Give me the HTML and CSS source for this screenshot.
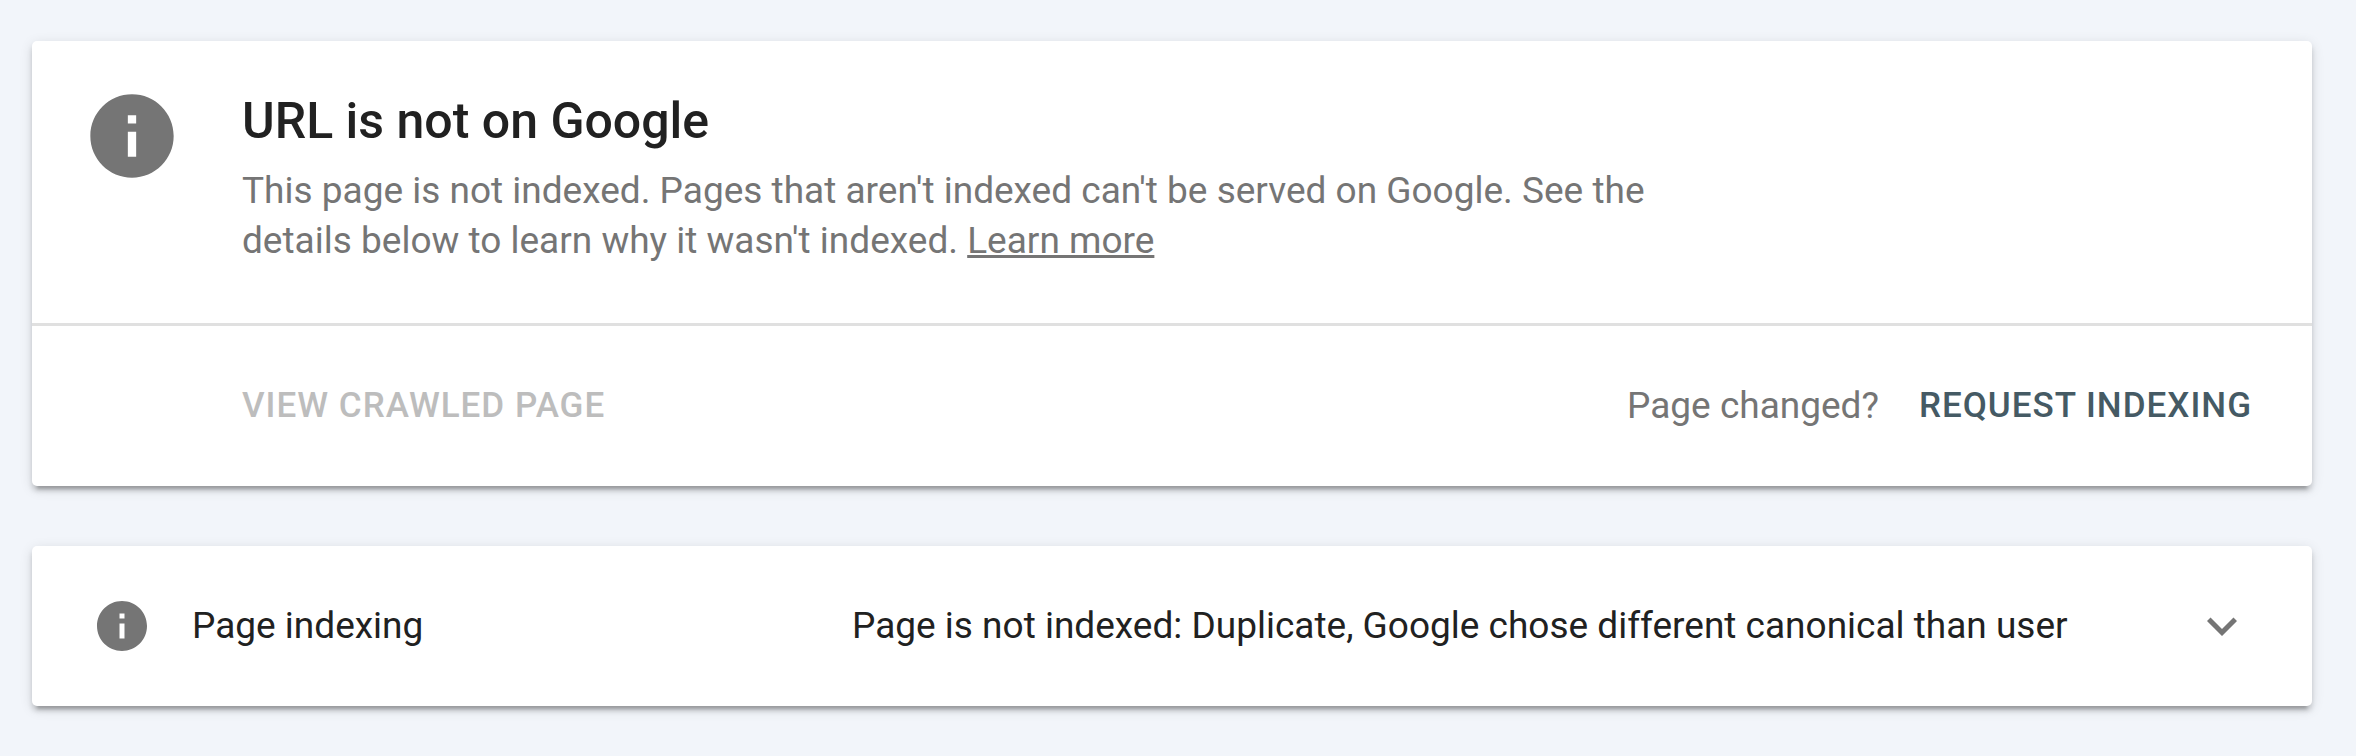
FILE: index.html
```
<!DOCTYPE html>
<html lang="en">
<head>
  <meta charset="UTF-8">
  <meta name="viewport" content="width=device-width, initial-scale=1.0">
  <title>URL Inspection</title>
  <link rel="stylesheet" href="styles.css">
</head>
<body>
  <main class="page">
    <section class="card">
      <div class="verdict">
        <svg class="icon icon-large" viewBox="0 0 24 24" aria-hidden="true">
          <path d="M12 2C6.48 2 2 6.48 2 12s4.48 10 10 10 10-4.48 10-10S17.52 2 12 2zm1 15h-2v-6h2v6zm0-8h-2V7h2v2z"/>
        </svg>
        <div class="verdict-text">
          <h1>URL is not on Google</h1>
          <p>This page is not indexed. Pages that aren't indexed can't be served on Google. See the details below to learn why it wasn't indexed. <a href="#">Learn more</a></p>
        </div>
      </div>
      <div class="actions">
        <button type="button" class="btn" disabled>View crawled page</button>
        <div class="request">
          <span class="hint">Page changed?</span>
          <button type="button" class="btn">Request indexing</button>
        </div>
      </div>
    </section>

    <section class="card">
      <button type="button" class="row" aria-expanded="false">
        <svg class="icon icon-small" viewBox="0 0 24 24" aria-hidden="true">
          <path d="M12 2C6.48 2 2 6.48 2 12s4.48 10 10 10 10-4.48 10-10S17.52 2 12 2zm1 15h-2v-6h2v6zm0-8h-2V7h2v2z"/>
        </svg>
        <span class="row-label">Page indexing</span>
        <span class="row-status">Page is not indexed: Duplicate, Google chose different canonical than user</span>
        <svg class="icon icon-small" viewBox="0 0 24 24" aria-hidden="true">
          <path d="M7.41 8.59L12 13.17l4.59-4.58L18 10l-6 6-6-6 1.41-1.41z"/>
        </svg>
      </button>
    </section>
  </main>
</body>
</html>
```

FILE: styles.css
```
/* Global Styles */
* {
  box-sizing: border-box;
}

body {
  margin: 0;
  background-color: #f2f5fa;
  color: #212121;
  font-family: Roboto, sans-serif;
  font-size: 37px;
  line-height: 50px;
}

.page {
  display: flex;
  flex-direction: column;
  gap: 60px;
  padding: 41px 44px 50px 32px;
}

.card {
  background-color: #fff;
  border-radius: 5px;
  box-shadow: 0 8px 3px -5px rgba(0, 0, 0, 0.2),
    0 5px 5px 0 rgba(0, 0, 0, 0.14),
    0 3px 13px 0 rgba(0, 0, 0, 0.12);
}

/* Icons */
.icon {
  flex: none;
  fill: #757575;
}

.icon-large {
  width: 100px;
  height: 100px;
}

.icon-small {
  width: 60px;
  height: 60px;
}

/* Verdict */
.verdict {
  display: flex;
  gap: 60px;
  padding: 45px 50px;
}

.verdict-text {
  max-width: 1500px;
  padding-bottom: 12px;
}

h1 {
  margin: 0 0 10px;
  font-size: 50px;
  font-weight: 500;
  line-height: 70px;
}

p {
  margin: 0;
  color: #757575;
}

p a {
  color: inherit;
}

/* Actions */
.actions {
  display: flex;
  align-items: center;
  justify-content: space-between;
  padding: 55px 60px 55px 210px;
  border-top: 3px solid #e0e0e0;
}

.request {
  display: flex;
  align-items: center;
  gap: 40px;
}

.hint {
  color: #757575;
}

.btn {
  padding: 0;
  border: 0;
  background: none;
  color: #455a64;
  font-family: inherit;
  font-size: 35px;
  font-weight: 500;
  line-height: 50px;
  letter-spacing: 1px;
  text-transform: uppercase;
  cursor: pointer;
}

.btn:disabled {
  color: #bdbdbd;
  cursor: default;
}

/* Expandable row */
.row {
  display: flex;
  align-items: center;
  width: 100%;
  padding: 50px 60px;
  border: 0;
  background: none;
  color: inherit;
  font: inherit;
  text-align: left;
  cursor: pointer;
}

.row-label {
  flex: 0 0 700px;
  padding-left: 40px;
}

.row-status {
  flex: 1;
}
```
